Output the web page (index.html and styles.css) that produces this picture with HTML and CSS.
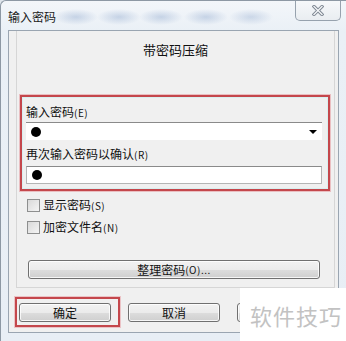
FILE: index.html
```html
<!DOCTYPE html>
<html lang="zh-CN">
<head>
<meta charset="utf-8">
<title>输入密码</title>
<link rel="stylesheet" href="styles.css">
</head>
<body>
<div class="window">
  <div class="titlebar">
    <span class="title">输入密码</span>
    <span class="close">
      <svg width="12" height="11" viewBox="0 0 12 11">
        <path d="M2 1.5 L10 9.5 M10 1.5 L2 9.5" stroke="#7d8691" stroke-width="3.2" stroke-linecap="square" fill="none"/>
        <path d="M2 1.5 L10 9.5 M10 1.5 L2 9.5" stroke="#f4f6f8" stroke-width="1.3" stroke-linecap="square" fill="none"/>
      </svg>
    </span>
  </div>
  <div class="client">
    <div class="panel">
      <div class="heading">带密码压缩</div>
      <div class="group">
        <div class="label">输入密码<span class="key">(E)</span></div>
        <div class="combo">
          <span class="dot"></span>
          <span class="arrow"></span>
        </div>
        <div class="label second">再次输入密码以确认<span class="key">(R)</span></div>
        <div class="field"><span class="dot"></span></div>
      </div>
      <div class="check first"><span class="box"></span><span>显示密码<span class="key">(S)</span></span></div>
      <div class="check"><span class="box"></span><span>加密文件名<span class="key">(N)</span></span></div>
      <div class="btn wide">整理密码<span class="key">(O)...</span></div>
    </div>
    <div class="actions">
      <span class="okwrap"><span class="btn">确定</span></span>
      <span class="btn plain">取消</span>
      <span class="btn plain"></span>
    </div>
  </div>
  <div class="watermark">软件技巧</div>
</div>
</body>
</html>
```

FILE: styles.css
```css
html, body {
  margin: 0;
  padding: 0;
}
body {
  width: 346px;
  height: 341px;
  overflow: hidden;
  background: #dfe5ec;
  font-family: "Noto Sans CJK SC", "Noto Sans", sans-serif;
  font-size: 12px;
  color: #111;
}
.window {
  position: relative;
  width: 346px;
  height: 341px;
  box-sizing: border-box;
  border-top: 1px solid #8d98a4;
  border-left: 1px solid #8d98a4;
  border-top-left-radius: 6px;
  background:
    radial-gradient(ellipse 22px 8px at 75px 16px, rgba(120,150,195,0.35), transparent),
    radial-gradient(ellipse 22px 8px at 118px 16px, rgba(120,150,195,0.35), transparent),
    radial-gradient(ellipse 22px 8px at 160px 16px, rgba(120,150,195,0.35), transparent),
    radial-gradient(ellipse 22px 8px at 205px 16px, rgba(120,150,195,0.35), transparent),
    radial-gradient(ellipse 22px 8px at 250px 16px, rgba(120,150,195,0.3), transparent),
    linear-gradient(#f3f6fa, #eaf0f6 30px, #e8eef5);
}
.titlebar {
  height: 29px;
  display: flex;
  align-items: flex-start;
  padding-left: 7px;
}
.title {
  margin-top: 8px;
  font-size: 12px;
  line-height: 16px;
  color: #1a1a1a;
}
.close {
  margin-left: auto;
  margin-right: 5px;
  width: 46px;
  height: 20px;
  box-sizing: border-box;
  border: 1px solid #97a2ae;
  border-top: none;
  border-radius: 0 0 5px 5px;
  background: linear-gradient(#f6f8fa, #e9edf1);
  display: flex;
  align-items: center;
  justify-content: center;
}
.client {
  margin-left: 7px;
  width: 331px;
  height: 303px;
  box-sizing: border-box;
  border: 1px solid #9aa5b1;
  background: #f0f0f0;
}
.panel {
  margin-left: 7px;
  width: 319px;
  height: 257px;
  box-sizing: border-box;
  border: 1px solid #d6d6d6;
  border-top: none;
  padding-top: 10px;
}
.heading {
  text-align: center;
  font-size: 13px;
  line-height: 18px;
}
.group {
  margin: 36px 4px 0 3px;
  border: 2px solid #c4474c;
  box-shadow: 0 0 0 1px rgba(230, 150, 155, 0.55), inset 0 0 0 1px rgba(200, 240, 240, 0.6);
  padding: 7px 6px 5px 4px;
}
.label {
  height: 16px;
  line-height: 16px;
}
.label.second {
  margin-top: 6px;
}
.key {
  font-size: 10px;
  letter-spacing: 0.5px;
}
.combo, .field {
  position: relative;
  margin-top: 2px;
  height: 18px;
  box-sizing: border-box;
  background: #fff;
  border-top: 1px solid #8a8a8a;
  display: flex;
  align-items: center;
  padding-left: 5px;
}
.field {
  margin-top: 4px;
  border: 1px solid #b5b5b5;
  border-top-color: #8a8a8a;
}
.dot {
  width: 10px;
  height: 10px;
  border-radius: 50%;
  background: #000;
}
.arrow {
  position: absolute;
  right: 5px;
  top: 7px;
  width: 0;
  height: 0;
  border-left: 4px solid transparent;
  border-right: 4px solid transparent;
  border-top: 4px solid #000;
}
.check {
  margin-left: 10px;
  height: 14px;
  display: flex;
  align-items: center;
  gap: 3px;
  line-height: 14px;
}
.check.first {
  margin-top: 7px;
}
.check + .check {
  margin-top: 8px;
}
.box {
  width: 11px;
  height: 11px;
  border: 1px solid #8e8f8f;
  background: linear-gradient(135deg, #d9d9d9, #f4f4f4);
}
.btn {
  display: flex;
  align-items: center;
  justify-content: center;
  width: 92px;
  height: 19px;
  box-sizing: border-box;
  border: 1px solid #707070;
  border-radius: 3px;
  background: linear-gradient(#f2f2f2 0%, #ebebeb 50%, #dddddd 51%, #cfcfcf 100%);
  box-shadow: inset 0 0 0 1px rgba(255,255,255,0.8);
  line-height: 16px;
}
.btn.wide {
  margin: 26px 0 0 11px;
  width: 292px;
}
.btn.plain {
  margin-top: 6px;
}
.actions {
  display: flex;
  align-items: flex-start;
  margin-top: 9px;
  padding-left: 6px;
  gap: 17px;
}
.okwrap {
  display: flex;
  border: 2px solid #c4474c;
  box-shadow: 0 0 0 1px rgba(230, 150, 155, 0.5);
  padding: 4px 7px 3px 2px;
  margin-right: -9px;
}
.watermark {
  position: absolute;
  left: 239px;
  top: 287px;
  width: 107px;
  height: 54px;
  background: #fff;
  color: #c2c2c2;
  font-size: 22px;
  line-height: 54px;
  padding-left: 10px;
  box-sizing: border-box;
  letter-spacing: 1px;
  white-space: nowrap;
}
```
